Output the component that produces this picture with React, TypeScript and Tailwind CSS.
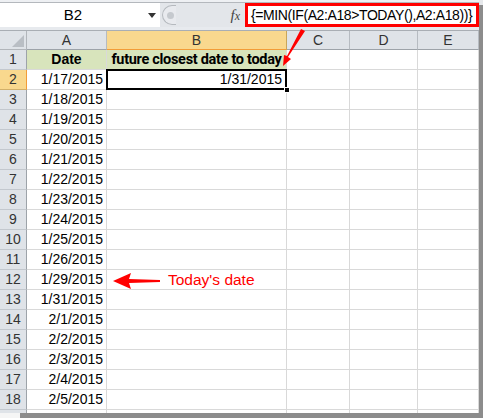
import React from "react";

const dates = [
  "1/17/2015", "1/18/2015", "1/19/2015", "1/20/2015", "1/21/2015", "1/22/2015",
  "1/23/2015", "1/24/2015", "1/25/2015", "1/26/2015", "1/29/2015", "1/31/2015",
  "2/1/2015", "2/2/2015", "2/3/2015", "2/4/2015", "2/5/2015",
];

const cols = ["A", "B", "C", "D", "E"];

function Corner() {
  return (
    <div className="relative h-[19px] border-r border-b border-[#b1b5ba] bg-[#dfe3e8]">
      <svg className="absolute right-[2px] bottom-[2px]" width="12" height="12" viewBox="0 0 12 12">
        <polygon points="12,0 12,12 0,12" fill="#b9bec4" />
      </svg>
    </div>
  );
}

function ColHead({ c }: { c: string }) {
  const sel = c === "B";
  return (
    <div
      className={
        "flex h-[19px] items-center justify-center border-r border-b text-[14px] " +
        (sel
          ? "border-r-[#c9a65a] border-b-[#f29c38] bg-[#f9d88e] text-[#333]"
          : "border-r-[#b6bbc1] border-b-[#9da3a9] bg-[#dfe3e8] text-[#333]")
      }
    >
      {c}
    </div>
  );
}

function RowHead({ n }: { n: number }) {
  const sel = n === 2;
  return (
    <div
      className={
        "flex h-[20px] items-center justify-center border-r border-b text-[14px] text-[#333] " +
        (sel
          ? "border-r-[#f29c38] border-b-[#d2b06a] bg-[#f9d88e]"
          : "border-r-[#9da3a9] border-b-[#c3c8ce] bg-[#dfe3e8]")
      }
    >
      {n}
    </div>
  );
}

function Cell({ children, green, right, bold }: { children?: React.ReactNode; green?: boolean; right?: boolean; bold?: boolean }) {
  return (
    <div
      className={
        "flex h-[20px] items-center overflow-visible whitespace-nowrap border-r border-b border-[#d9d9d9] px-[3px] text-[14px] text-black " +
        (green ? "bg-[#d8e4bc] " : "bg-white ") +
        (right ? "justify-end " : "justify-center ") +
        (bold ? "font-bold" : "")
      }
    >
      {children}
    </div>
  );
}

export default function App() {
  const rows: React.ReactNode[] = [];
  for (let i = 0; i < 17; i++) {
    const n = i + 2;
    rows.push(
      <React.Fragment key={n}>
        <RowHead n={n} />
        <Cell right>{dates[i]}</Cell>
        {n === 2 ? (
          <div className="relative flex h-[20px] items-center justify-end border-b border-r border-[#d9d9d9] bg-white px-[4px] text-[14px]">
            <div className="absolute -top-px -left-px -right-px -bottom-px border-2 border-black" />
            <div className="absolute -right-[4px] -bottom-[4px] h-[6px] w-[6px] border border-white bg-black" />
            <span className="relative">1/31/2015</span>
          </div>
        ) : (
          <Cell />
        )}
        <Cell />
        <Cell />
        <Cell />
      </React.Fragment>
    );
  }

  return (
    <div className="relative h-[418px] w-[483px] overflow-hidden bg-[#8c8c8c] font-['Liberation_Sans',Arial,sans-serif]">
      <div className="h-[413px] w-[479px] bg-white">
        {/* formula bar */}
        <div className="h-[3px] border-b border-[#b4b8bd] bg-[#eef0f3]" />
        <div className="flex h-[24px] items-stretch bg-[#e3e6ea]">
          <div className="flex w-[160px] shrink-0 items-center bg-white">
            <span className="flex-1 pr-[2px] text-center text-[15px] text-black">B2</span>
            <svg className="mr-[4px]" width="8" height="5" viewBox="0 0 8 5">
              <polygon points="0,0 8,0 4,5" fill="#333" />
            </svg>
          </div>
          <div className="relative flex w-[85px] shrink-0 items-center">
            <div className="ml-[2px] flex h-[20px] w-[14px] items-center rounded-l-full border border-r-0 border-[#b5b9be] bg-[#e8eaee] pl-[4px]">
              <div className="h-[7px] w-[7px] rounded-full bg-[#c5c9ce]" />
            </div>
            <span className="ml-auto mr-[5px] font-['Liberation_Serif',serif] text-[15px] italic text-[#444]">
              f<span className="text-[12px]">x</span>
            </span>
          </div>
          <div className="flex min-w-0 flex-1 items-center overflow-hidden whitespace-nowrap border-[3px] border-[#ff0000] bg-white pl-[3px] text-[14px] tracking-[-0.4px] text-black">
            {"{=MIN(IF(A2:A18>TODAY(),A2:A18))}"}
          </div>
        </div>
        <div className="h-[4px] border-b border-[#a9aeb4] bg-[#e7eaee]" />

        {/* sheet */}
        <div className="grid grid-cols-[27px_80px_180px_63px_68px_61px]">
          <Corner />
          {cols.map((c) => (
            <ColHead key={c} c={c} />
          ))}
          <RowHead n={1} />
          <Cell green bold>Date</Cell>
          <div className="flex h-[20px] items-center justify-center whitespace-nowrap border-r border-b border-[#d9d9d9] bg-[#d8e4bc] font-['Roboto',sans-serif] text-[14.5px] font-bold tracking-[-0.3px] text-black">
            future closest date to today
          </div>
          <Cell />
          <Cell />
          <Cell />
          {rows}
          <div className="h-[3px] border-r border-[#9da3a9] bg-[#dfe3e8]" />
          <div className="h-[3px] border-r border-[#d9d9d9]" />
          <div className="h-[3px] border-r border-[#d9d9d9]" />
          <div className="h-[3px] border-r border-[#d9d9d9]" />
          <div className="h-[3px] border-r border-[#d9d9d9]" />
          <div className="h-[3px] border-r border-[#d9d9d9]" />
        </div>
      </div>
      <div className="absolute top-0 right-0 h-[5px] w-[4px] bg-[#e6e8eb]" />
      <div className="absolute bottom-0 left-0 h-[5px] w-[20px] bg-[#f5f5f5]" />

      {/* annotations */}
      <svg className="pointer-events-none absolute top-0 left-0" width="483" height="418" viewBox="0 0 483 418">
        <polygon points="301,29 305,31 288,57 291,59 283,66 284,55 287,56" fill="#ff0000" />
        <polygon points="113,281 131,273 129,279 160,280 160,282 129,283 131,289" fill="#ff0000" />
      </svg>
      <span className="absolute top-[268px] left-[168px] font-['Liberation_Sans',Arial,sans-serif] text-[15.5px] text-[#ff0000]">
        Today's date
      </span>
    </div>
  );
}
